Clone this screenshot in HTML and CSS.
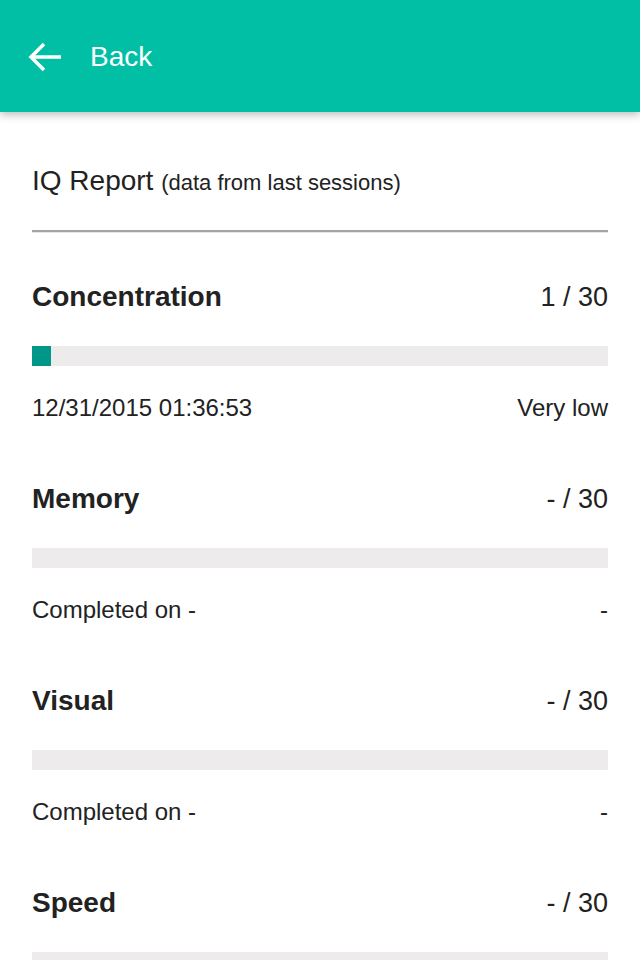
FILE: index.html
```html
<!DOCTYPE html>
<html lang="en">
<head>
  <meta charset="UTF-8">
  <meta name="viewport" content="width=device-width, initial-scale=1.0">
  <title>IQ Report</title>
  <link rel="stylesheet" href="styles.css">
</head>
<body>
  <header class="topbar">
    <svg class="back-icon" width="36" height="36" viewBox="0 0 36 36">
      <path d="M34 17H4M17 4L4 17L17 30" fill="none" stroke="#fff" stroke-width="3.5"/>
    </svg>
    <span class="back-label">Back</span>
  </header>

  <main class="report">
    <h1 class="report-title">IQ Report <small>(data from last sessions)</small></h1>
    <hr class="divider">

    <section class="skill">
      <div class="row">
        <h2 class="skill-name">Concentration</h2>
        <span class="score">1 / 30</span>
      </div>
      <div class="bar"><div class="bar-fill" style="width: 3.33%"></div></div>
      <div class="row meta">
        <span>12/31/2015 01:36:53</span>
        <span>Very low</span>
      </div>
    </section>

    <section class="skill">
      <div class="row">
        <h2 class="skill-name">Memory</h2>
        <span class="score">- / 30</span>
      </div>
      <div class="bar"></div>
      <div class="row meta">
        <span>Completed on -</span>
        <span>-</span>
      </div>
    </section>

    <section class="skill">
      <div class="row">
        <h2 class="skill-name">Visual</h2>
        <span class="score">- / 30</span>
      </div>
      <div class="bar"></div>
      <div class="row meta">
        <span>Completed on -</span>
        <span>-</span>
      </div>
    </section>

    <section class="skill">
      <div class="row">
        <h2 class="skill-name">Speed</h2>
        <span class="score">- / 30</span>
      </div>
      <div class="bar"></div>
      <div class="row meta">
        <span>Completed on -</span>
        <span>-</span>
      </div>
    </section>
  </main>
</body>
</html>
```

FILE: styles.css
```css
body {
  margin: 0;
  font-family: "Liberation Sans", Arial, sans-serif;
  color: #222;
  background: #fff;
  overflow: hidden;
  height: 960px;
}

.topbar {
  height: 112px;
  background: #00bfa5;
  display: flex;
  align-items: center;
  padding-left: 27px;
  box-shadow: 0 3px 8px rgba(0, 0, 0, 0.25);
  position: relative;
}

.back-icon {
  display: block;
  margin-top: 4px;
}

.back-label {
  color: #fff;
  font-size: 28px;
  margin-left: 27px;
  margin-top: 2px;
}

.report {
  padding: 0 32px;
}

.report-title {
  margin: 54px 0 0;
  font-size: 28px;
  font-weight: normal;
  line-height: 30px;
}

.report-title small {
  font-size: 22px;
}

.divider {
  margin: 32px 0 0;
  border: none;
  border-top: 2px solid #a3a3a3;
  border-bottom: 1px solid #e6e6e6;
}

.skill {
  margin-top: 49px;
}

.skill + .skill {
  margin-top: 64px;
}

.row {
  display: flex;
  justify-content: space-between;
  align-items: center;
}

.skill-name {
  margin: 0;
  font-size: 28px;
  line-height: 30px;
  font-weight: bold;
}

.score {
  font-size: 27px;
  line-height: 30px;
}

.bar {
  margin-top: 34px;
  height: 20px;
  background: #edebec;
}

.bar-fill {
  height: 100%;
  background: #009688;
}

.meta {
  margin-top: 30px;
  font-size: 24px;
  line-height: 24px;
}
```
